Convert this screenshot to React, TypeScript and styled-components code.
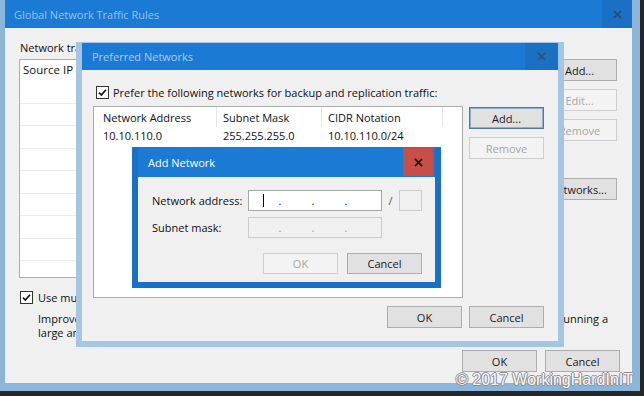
import styled, { createGlobalStyle } from 'styled-components'

const BLUE = '#1b7ad3'
const FRAME = '#8cb5dc'
const SURFACE = '#f0f0f0'

const GlobalStyle = createGlobalStyle`
  * { box-sizing: border-box; }
  html, body { margin: 0; padding: 0; background: #1f1f1f; }
  body {
    font-family: "Open Sans", "Noto Sans", sans-serif;
    font-size: 11px;
    line-height: 15px;
    color: #111;
  }
`

type Kind = 'normal' | 'default' | 'disabled'

const CloseGlyph = ({ color, size, weight }: { color: string; size: number; weight: number }) => (
  <svg width={size} height={size} viewBox="0 0 10 10">
    <path d="M1 1L9 9M9 1L1 9" stroke={color} strokeWidth={weight} fill="none" />
  </svg>
)

const Check = ({ checked = true }: { checked?: boolean }) => (
  <CheckBox>
    {checked && (
      <svg width="11" height="11" viewBox="0 0 11 11">
        <path d="M2 5.6L4.4 8L9 2.8" stroke="#111" strokeWidth="1.7" fill="none" />
      </svg>
    )}
  </CheckBox>
)

const IpField = ({ disabled, cursor }: { disabled?: boolean; cursor?: boolean }) => (
  <IpBox $disabled={disabled}>
    {[0, 1, 2, 3].map((i) => (
      <IpPart key={i}>
        <IpSegment>{cursor && i === 0 && <Caret />}</IpSegment>
        {i < 3 && <IpDot $disabled={disabled}>.</IpDot>}
      </IpPart>
    ))}
  </IpBox>
)

const App = () => {
  const emptyRows = Array.from({ length: 9 })

  return (
    <Desktop>
      <GlobalStyle />

      <Window>
        <TitleBar $h={28}>
          <Title $color="#93c2ee" $indent={9}>Global Network Traffic Rules</Title>
          <CloseBox $w={30} $h={28} $bg="#1a71c4">
            <CloseGlyph color="#2a4668" size={9} weight={1.6} />
          </CloseBox>
        </TitleBar>

        <OuterBody>
          <FieldLabel>Network traffic rules:</FieldLabel>
          <RulesRow>
            <ListBox>
              <RuleHeader>Source IP</RuleHeader>
              {emptyRows.map((_, i) => (
                <RuleRow key={i} />
              ))}
            </ListBox>
            <ButtonColumn $w={130}>
              <Button>Add...</Button>
              <Button $kind="disabled">Edit...</Button>
              <Button $kind="disabled">Remove</Button>
              <Button $w={130} $gapTop={29}>
                Preferred Networks...
              </Button>
            </ButtonColumn>
          </RulesRow>

          <CheckRow $indent={1} $gap={5}>
            <Check />
            <span>Use multiple upload streams per job:</span>
          </CheckRow>
          <Description>
            <SplitLine>
              <span>Improves performance of jobs over slow links. Recommended when</span>
              <span>running a</span>
            </SplitLine>
            <div>large amount of concurrent jobs over WAN links.</div>
          </Description>

          <Footer $gapTop={10} $gap={8} $shift={-3}>
            <Button>OK</Button>
            <Button>Cancel</Button>
          </Footer>
        </OuterBody>
      </Window>

      <Dialog $x={76} $y={42} $w={488} $h={305} $frame="#a5c5e3" $top={1}>
        <TitleBar $h={27}>
          <Title $color="#a7cdf1" $indent={10}>Preferred Networks</Title>
          <CloseBox $w={33} $h={27} $bg="#1a70c2">
            <CloseGlyph color="#34506f" size={9} weight={1.7} />
          </CloseBox>
        </TitleBar>
        <PrefBody>
          <CheckRow $indent={3} $gap={4}>
            <Check />
            <span>Prefer the following networks for backup and replication traffic:</span>
          </CheckRow>
          <PrefRow>
            <NetList>
              <NetHeader>
                <HeaderCell $pad={9}>Network Address</HeaderCell>
                <HeaderCell>Subnet Mask</HeaderCell>
                <HeaderCell>CIDR Notation</HeaderCell>
                <HeaderCell />
              </NetHeader>
              <NetRow>
                <Cell $pad={9}>10.10.110.0</Cell>
                <Cell>255.255.255.0</Cell>
                <Cell>10.10.110.0/24</Cell>
              </NetRow>
            </NetList>
            <ButtonColumn $w={75} $padTop={1}>
              <Button $kind="default">Add...</Button>
              <Button $kind="disabled">Remove</Button>
            </ButtonColumn>
          </PrefRow>
          <Footer $gapTop={8} $gap={7}>
            <Button>OK</Button>
            <Button>Cancel</Button>
          </Footer>
        </PrefBody>
      </Dialog>

      <Dialog $x={132} $y={147} $w={309} $h={141} $frame="#1870c8" $top={0}>
        <TitleBar $h={30}>
          <Title $color="#ffffff" $indent={10}>Add Network</Title>
          <CloseBox $w={30} $h={28} $bg="#c65047" $gap={2}>
            <CloseGlyph color="#1a1a1a" size={9} weight={2} />
          </CloseBox>
        </TitleBar>
        <AddBody>
          <AddRow>
            <AddLabel>Network address:</AddLabel>
            <IpField cursor />
            <Slash>/</Slash>
            <PrefixBox />
          </AddRow>
          <AddRow>
            <AddLabel>Subnet mask:</AddLabel>
            <IpField disabled />
          </AddRow>
          <Footer $gapTop={9} $gap={9}>
            <Button $kind="disabled" $h={21}>OK</Button>
            <Button $h={21}>Cancel</Button>
          </Footer>
        </AddBody>
      </Dialog>

      <Watermark>© 2017 WorkingHardInIT</Watermark>
    </Desktop>
  )
}

const Desktop = styled.div`
  position: relative;
  width: 644px;
  height: 396px;
  overflow: hidden;
  background: #262626;
`

const Window = styled.div`
  display: flex;
  flex-direction: column;
  width: 640px;
  height: 391px;
  padding: 0 8px 8px 5px;
  background: ${FRAME};
`

const Dialog = styled.div<{ $x: number; $y: number; $w: number; $h: number; $frame: string; $top: number }>`
  position: absolute;
  left: ${(p) => p.$x}px;
  top: ${(p) => p.$y}px;
  width: ${(p) => p.$w}px;
  height: ${(p) => p.$h}px;
  display: flex;
  flex-direction: column;
  padding: ${(p) => p.$top}px 6px 6px;
  background: ${(p) => p.$frame};
`

const TitleBar = styled.div<{ $h: number }>`
  display: flex;
  align-items: center;
  flex-shrink: 0;
  height: ${(p) => p.$h}px;
  background: ${BLUE};
`

const Title = styled.span<{ $color: string; $indent: number }>`
  flex: 1;
  padding-left: ${(p) => p.$indent}px;
  color: ${(p) => p.$color};
  font-size: 11px;
  white-space: nowrap;
`

const CloseBox = styled.div<{ $w: number; $h: number; $bg: string; $gap?: number }>`
  display: flex;
  align-items: center;
  justify-content: center;
  width: ${(p) => p.$w}px;
  height: ${(p) => p.$h}px;
  margin-right: ${(p) => p.$gap ?? 0}px;
  background: ${(p) => p.$bg};
`

const OuterBody = styled.div`
  flex: 1;
  display: flex;
  flex-direction: column;
  padding: 12px 15px 0 14px;
  background: ${SURFACE};
`

const FieldLabel = styled.div`
  margin-left: 1px;
  white-space: nowrap;
`

const RulesRow = styled.div`
  display: flex;
  gap: 12px;
  height: 219px;
  margin-top: 4px;
`

const ListBox = styled.div`
  flex: 1;
  background: #fff;
  border: 1px solid #adadad;
  overflow: hidden;
`

const RuleHeader = styled.div`
  height: 21px;
  padding: 2px 0 0 3px;
  font-size: 11.5px;
`

const RuleRow = styled.div`
  height: 22.5px;
  border-bottom: 1px solid #ececec;
`

const ButtonColumn = styled.div<{ $w: number; $padTop?: number }>`
  display: flex;
  flex-direction: column;
  align-items: flex-end;
  gap: 8px;
  width: ${(p) => p.$w}px;
  padding-top: ${(p) => p.$padTop ?? 0}px;
  flex-shrink: 0;
`

const Button = styled.button<{ $kind?: Kind; $w?: number; $h?: number; $gapTop?: number }>`
  width: ${(p) => p.$w ?? 75}px;
  height: ${(p) => p.$h ?? 22}px;
  margin-top: ${(p) => p.$gapTop ?? 0}px;
  padding: 0;
  font-family: inherit;
  font-size: 11px;
  line-height: 1;
  color: ${(p) => (p.$kind === 'disabled' ? '#a6a6a6' : '#1a1a1a')};
  background: ${(p) => (p.$kind === 'disabled' ? '#f3f3f3' : '#e1e1e1')};
  border: 1px solid ${(p) => (p.$kind === 'disabled' ? '#cfcfcf' : p.$kind === 'default' ? '#4f7aa8' : '#adadad')};
  box-shadow: ${(p) => (p.$kind === 'default' ? 'inset 0 0 0 1px #8fadd0' : 'none')};
  flex-shrink: 0;
`

const CheckRow = styled.div<{ $indent: number; $gap: number }>`
  display: flex;
  align-items: center;
  gap: ${(p) => p.$gap}px;
  height: 14px;
  margin-left: ${(p) => p.$indent}px;
  margin-top: 12px;
  white-space: nowrap;
`

const CheckBox = styled.span`
  display: inline-flex;
  align-items: center;
  justify-content: center;
  width: 13px;
  height: 13px;
  background: #fff;
  border: 1px solid #333;
  flex-shrink: 0;
`

const Description = styled.div`
  width: 570px;
  margin: 8px 0 0 19px;
  line-height: 14px;
  white-space: nowrap;
`

const SplitLine = styled.div`
  display: flex;
  justify-content: space-between;
`

const Footer = styled.div<{ $gapTop: number; $gap: number; $shift?: number }>`
  display: flex;
  justify-content: flex-end;
  gap: ${(p) => p.$gap}px;
  margin-top: ${(p) => p.$gapTop}px;
  margin-right: ${(p) => p.$shift ?? 0}px;
`

const PrefBody = styled.div`
  flex: 1;
  display: flex;
  flex-direction: column;
  padding: 3px 14px 0 11px;
  background: ${SURFACE};
`

const PrefRow = styled.div`
  display: flex;
  gap: 6px;
  margin-top: 7px;
`

const NetList = styled.div`
  width: 370px;
  height: 192px;
  background: #fff;
  border: 1px solid #adadad;
`

const NetHeader = styled.div`
  display: grid;
  grid-template-columns: 123px 105px 121px 1fr;
  height: 20px;
`

const HeaderCell = styled.div<{ $pad?: number }>`
  display: flex;
  align-items: center;
  padding-left: ${(p) => p.$pad ?? 6}px;
  border-right: 1px solid #e5e5e5;
  white-space: nowrap;

  &:last-child {
    border-right: 0;
  }
`

const NetRow = styled.div`
  display: grid;
  grid-template-columns: 123px 105px 121px;
  height: 17px;
`

const Cell = styled.div<{ $pad?: number }>`
  display: flex;
  align-items: center;
  padding-left: ${(p) => p.$pad ?? 6}px;
  white-space: nowrap;
`

const AddBody = styled.div`
  flex: 1;
  display: flex;
  flex-direction: column;
  gap: 6px;
  padding: 13px 13px 0 14px;
  background: ${SURFACE};
`

const AddRow = styled.div`
  display: flex;
  align-items: center;
  height: 21px;
`

const AddLabel = styled.div`
  width: 96px;
  white-space: nowrap;
`

const IpBox = styled.div<{ $disabled?: boolean }>`
  display: flex;
  width: 134px;
  height: 21px;
  background: ${(p) => (p.$disabled ? SURFACE : '#fff')};
  border: 1px solid ${(p) => (p.$disabled ? '#cccccc' : '#a8a8a8')};
`

const IpPart = styled.div`
  flex: 1;
  display: flex;
  align-items: center;
`

const IpSegment = styled.div`
  flex: 1;
  display: flex;
  justify-content: center;
  align-items: center;
`

const Caret = styled.span`
  display: block;
  width: 1px;
  height: 13px;
  background: #000;
`

const IpDot = styled.span<{ $disabled?: boolean }>`
  width: 4px;
  text-align: center;
  color: ${(p) => (p.$disabled ? '#9a9a9a' : '#222')};
`

const Slash = styled.span`
  width: 17px;
  text-align: center;
  color: #555;
`

const PrefixBox = styled.div`
  width: 23px;
  height: 21px;
  background: ${SURFACE};
  border: 1px solid #cccccc;
`

const Watermark = styled.div`
  position: absolute;
  right: 11px;
  top: 371px;
  font-family: "Liberation Sans", Arial, sans-serif;
  font-size: 16px;
  line-height: 18px;
  color: #fafafa;
  text-shadow: 1px 0 0 #8a8a8a, -1px 0 0 #8a8a8a, 0 1px 0 #8a8a8a, 0 -1px 0 #8a8a8a;
  white-space: nowrap;
`

export default App
